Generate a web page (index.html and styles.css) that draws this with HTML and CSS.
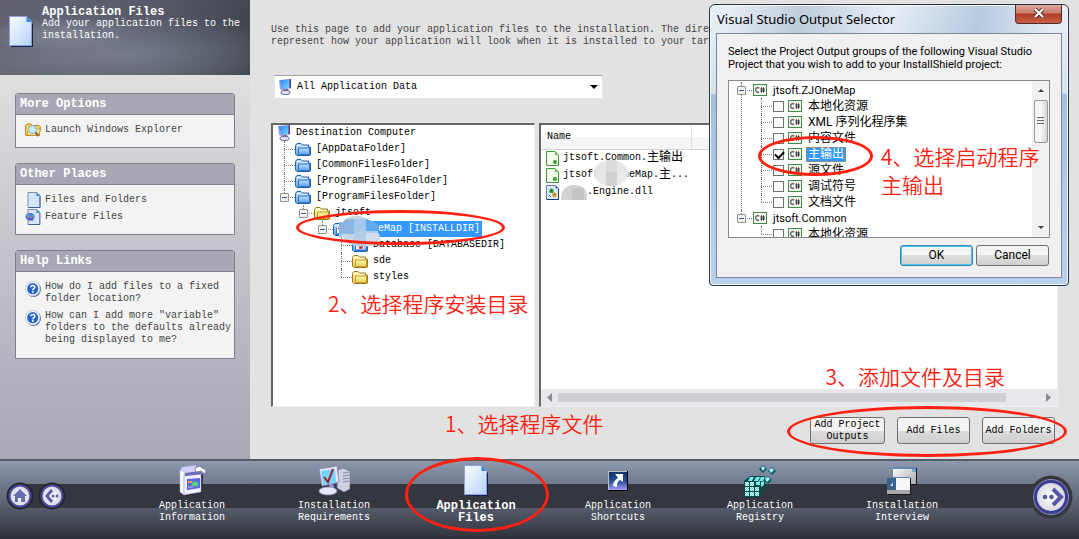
FILE: index.html
```html
<!DOCTYPE html>
<html lang="en">
<head>
    <meta charset="UTF-8">
    <meta name="viewport" content="width=device-width, initial-scale=1.0">
    <title>Application Files</title>
    <link rel="stylesheet" href="styles.css">
</head>
<body>
    <!-- shared icons -->
    <svg class="sprite" width="0" height="0" aria-hidden="true">
        <defs>
            <linearGradient id="g-page" x1="0" y1="0" x2="1" y2="1"><stop offset="0" stop-color="#fdfeff"/><stop offset="1" stop-color="#b4d2f8"/></linearGradient>
            <linearGradient id="g-blue" x1="0" y1="0" x2="0" y2="1"><stop offset="0" stop-color="#c4e0fa"/><stop offset="1" stop-color="#5ea2e6"/></linearGradient>
            <linearGradient id="g-yellow" x1="0" y1="0" x2="0" y2="1"><stop offset="0" stop-color="#fff6b4"/><stop offset="1" stop-color="#f0cf52"/></linearGradient>
            <linearGradient id="g-screen" x1="0" y1="0" x2="1" y2="1"><stop offset="0" stop-color="#2f7ff0"/><stop offset="1" stop-color="#6fdcfa"/></linearGradient>
            <linearGradient id="g-short" x1="0" y1="0" x2="0" y2="1"><stop offset="0" stop-color="#0d3464"/><stop offset=".5" stop-color="#2a4c94"/><stop offset="1" stop-color="#a09cf4"/></linearGradient>
            <linearGradient id="g-win" x1="0" y1="0" x2="1" y2="1"><stop offset="0" stop-color="#ffffff"/><stop offset="1" stop-color="#a9a9a9"/></linearGradient>
            <radialGradient id="g-knob"><stop offset="0" stop-color="#ffffff"/><stop offset="1" stop-color="#d5d5de"/></radialGradient>
            <pattern id="p-cube" width="2" height="2" patternUnits="userSpaceOnUse"><rect width="2" height="2" fill="#5fd6d6"/><path d="M0 0h1v1h-1zM1 1h1v1h-1z" fill="#e8ffff"/></pattern>
        </defs>
        <symbol id="i-page" viewBox="0 0 24 31">
            <path d="M2 2h16l6 6v23H2z" fill="#16204a"/>
            <path d="M.5.5h17l5 5v24h-22z" fill="url(#g-page)" stroke="#8f9fe0"/>
            <path d="M17.500 .5l5 5.500h-5z" fill="#2d8ae0"/>
        </symbol>
        <symbol id="i-folder-blue" viewBox="0 0 16 13">
            <path d="M.5 11V2.500l1.500-2h4l1.500 1.500h6v2h2v8l-1 .5H2z" fill="url(#g-blue)" stroke="#1d63ae"/>
            <path d="M3.500 5h11v6.500h-11z" fill="url(#g-blue)" stroke="#2f78c2"/>
            <path d="M2 2.500h4l1 1h5" fill="none" stroke="#e8f4ff"/>
        </symbol>
        <symbol id="i-folder" viewBox="0 0 16 13">
            <path d="M.5 11V2.500l1.500-2h4l1.500 1.500h6v2h2v8l-1 .5H2z" fill="url(#g-yellow)" stroke="#9c7a12"/>
            <path d="M3.500 5h11v6.500h-11z" fill="url(#g-yellow)" stroke="#bf9a2c"/>
            <path d="M2 2.500h4l1 1h5" fill="none" stroke="#fffce0"/>
        </symbol>
        <symbol id="i-folder-red" viewBox="0 0 16 13">
            <use href="#i-folder-blue"/>
            <path d="M4 4h8v6H4z" fill="#fff"/>
            <path d="M5 5l5 4M10 6v3H7" fill="none" stroke="#d0202a" stroke-width="1.500"/>
        </symbol>
        <symbol id="i-computer" viewBox="0 0 12 16">
            <path d="M0 1l11-1v9l-8 2-2-1z" fill="#9a9ae6"/>
            <path d="M1 1.500l9-1v8L3 10z" fill="url(#g-screen)"/>
            <path d="M10.500 0H12v9l-1.500 1z" fill="#4a3f8c"/>
            <path d="M4 10.500l5-1 1 3.500H4z" fill="#7d6e9e"/>
            <ellipse cx="6.500" cy="13.500" rx="4.500" ry="2.200" fill="#dcdcf4" stroke="#5d4c80" stroke-width=".9"/>
        </symbol>
        <symbol id="i-explorer" viewBox="0 0 16 14">
            <path d="M.6 12V2.500L2 1h4l1 1.500h7l1.400 1.500-1 8.500H2z" fill="#f8d35c" stroke="#b0801c"/>
            <path d="M2 12l2-6h11.500l-2 6.500z" fill="#fce58c" stroke="#c09028" stroke-width=".7"/>
            <circle cx="7.500" cy="6.500" r="4" fill="#c2ecfb" stroke="#7fb0d8"/>
            <path d="M10.500 9.500l3 3.500" stroke="#96603c" stroke-width="2"/>
        </symbol>
        <symbol id="i-doc" viewBox="0 0 15 16">
            <path d="M2.500.5h9l3 3v12h-12z" fill="#d5e5fc" stroke="#7c8cb0"/>
            <path d="M11 .5l3.500 3.500H11z" fill="#3c86c8"/>
            <path d="M14.500 4v11.500h-11" fill="none" stroke="#41608a"/>
        </symbol>
        <symbol id="i-feature" viewBox="0 0 15 16">
            <use href="#i-doc"/>
            <ellipse cx="4.500" cy="7.500" rx="4.500" ry="3.500" fill="#5668cc"/>
            <path d="M0 5h4l1 2 3-2 1 2-3 2-4-1z" fill="#3bb5ee"/>
            <path d="M2 6l3 2 3-1" fill="none" stroke="#d8506c"/>
            <path d="M3 11h5" stroke="#3c3c94"/>
        </symbol>
        <symbol id="i-help" viewBox="0 0 16 16">
            <circle cx="8.500" cy="8.500" r="7.500" fill="#5d6f96"/>
            <circle cx="7.700" cy="7.700" r="7.200" fill="#fff" stroke="#b9c6dd"/>
            <circle cx="7.700" cy="7.700" r="5.600" fill="#2b63cd"/>
            <path d="M5.800 6.300c0-2.600 4.200-2.400 4 0-.1 1.400-2 1.400-2 2.900" fill="none" stroke="#fff" stroke-width="1.500"/>
            <circle cx="7.800" cy="11" r=".9" fill="#fff"/>
        </symbol>
        <symbol id="i-output" viewBox="0 0 13 15">
            <path d="M.5.5h8.500l3.500 3.500v10.500H.5z" fill="#f2faec" stroke="#3c9a34" />
            <path d="M9 .5V4h3.500z" fill="#63b858"/>
            <path d="M1 14.500h11.500V4" fill="none" stroke="#3c9a34"/>
            <circle cx="9" cy="11" r="2" fill="#37a22e"/>
        </symbol>
        <symbol id="i-dll" viewBox="0 0 13 15">
            <path d="M.5.5h9l3 3v11H.5z" fill="#dfecff" stroke="#5d76b4"/>
            <path d="M9.500.5v3h3z" fill="#3668b0"/>
            <path d="M12.500 4v10.500H1" fill="none" stroke="#1f3770"/>
            <path d="M3 6l2-3 3 2-1 3H4z" fill="#2d9c38"/>
            <path d="M6 9l2-2 3 2-1 3-3 .5z" fill="#dca22c"/>
            <path d="M3 10l2 2M5 5.500h1M8 9.500h1" stroke="#26479a"/>
        </symbol>
        <symbol id="i-csharp" viewBox="0 0 14 12">
            <rect x=".5" y=".5" width="13" height="11" fill="#f4f6f2" stroke="#3f8b3f"/>
            <path d="M6.200 4.300C4.500 3 2.600 4 2.600 6s1.900 3 3.600 1.700" fill="none" stroke="#555" stroke-width="1.200"/>
            <path d="M8.500 3.300v5.400M10.500 3.300v5.400M7.300 5h4.700M7.300 7h4.700" stroke="#333" stroke-width=".9"/>
        </symbol>
        <symbol id="i-box" viewBox="0 0 28 31">
            <path d="M4 29l4 2 16-3 1-19-2 1v16z" fill="#1d1e28"/>
            <path d="M3 2l15-2 1 7-13 4-4-1z" fill="#cfcff8" stroke="#9090cc" stroke-width=".6"/>
            <path d="M2 5l4 2v23l-4-3z" fill="#f8f8ff" stroke="#b6b6dc" stroke-width=".5"/>
            <path d="M6 11l17-2v18L6 30z" fill="#f0f0fe" stroke="#a4a4dc" stroke-width=".6"/>
            <path d="M7 8l15-2 2 3-17 2z" fill="#6c6cb8"/>
            <path d="M9 14l13-1v10L9 25z" fill="#6161e6"/>
            <path d="M10 16h4v2h-4z" fill="#f0a040"/>
            <ellipse cx="17" cy="19" rx="3.500" ry="2.500" fill="#50d078"/>
            <path d="M10 22h5" stroke="#a8c8ff"/>
            <path d="M17 3l5-2 2 2 4 2-1 4-4-3-5 1z" fill="#fff" stroke="#70708c" stroke-width=".7"/>
        </symbol>
        <symbol id="i-require" viewBox="0 0 32 31">
            <path d="M20 5l5-2 7 3v18l-6 3-7-4z" fill="#cfd0e2" stroke="#77779c" stroke-width=".8"/>
            <path d="M25 8l6-1M25 11l6-1M25 14l6-1M25 17l6-1" stroke="#8585a8"/>
            <path d="M1 4l18-3 2 16-17 4z" fill="#e6e6fa" stroke="#8080b0" stroke-width=".8"/>
            <path d="M3 6l14-2 1 13-13 3z" fill="#73d4fb"/>
            <path d="M6 12l4 5 5-13" fill="none" stroke="#a31c24" stroke-width="2"/>
            <path d="M11 19l4-1 2 7h-6z" fill="#9292d4"/>
            <ellipse cx="10" cy="26" rx="9" ry="4" fill="#e8e8f6" stroke="#8c8cb0" stroke-width=".8"/>
        </symbol>
        <symbol id="i-shortcut" viewBox="0 0 20 20">
            <path d="M0 0h20v20H0z" fill="#000"/>
            <path d="M0 0h19v19H0z" fill="#c0c0c4"/>
            <path d="M1 1h18v18H1z" fill="url(#g-short)"/>
            <path d="M7 3h8v8l-3-2c-3 2-3 4-3 7l-4-1c0-4 2-6 5-8z" fill="#fff"/>
        </symbol>
        <symbol id="i-registry" viewBox="0 0 32 32">
            <path d="M0 16l6-5h15v13l-5 8H0z" fill="#064a4a"/>
            <path d="M1 17h4v4H1zM6 17h4v4H6zM1 22h4v4H1zM6 22h4v4H6zM11 22h4v4h-4zM1 27h4v4H1zM6 27h4v4H6zM11 27h4v4h-4z" fill="url(#p-cube)"/>
            <path d="M6 12h4l-2 4H4zM12 12h4l-2 4h-4zM17 12h4l-2 4h-4zM12 17l4-1v4h-4zM17 17l3-1v4l-3 2z" fill="#7deaea"/>
            <path d="M19 0l4 4-4 4-4-4z" fill="#0a5c5c"/><path d="M19 1l2 2-2 3-2-3z" fill="#a8ffff"/>
            <path d="M28 2l4 4-4 4-4-4z" fill="#0a5c5c"/><path d="M28 3l2 2-3 3-2-3z" fill="#a8ffff"/>
            <path d="M24 11l4 4-4 4-4-4z" fill="#0a5c5c"/><path d="M24 12l2 2-3 3-2-3z" fill="#a8ffff"/>
        </symbol>
        <symbol id="i-interview" viewBox="0 0 30 28">
            <path d="M7 1h23v17H7z" fill="#15161a"/><path d="M6 0h23v17H6z" fill="url(#g-win)"/><path d="M6 0h23v2H6z" fill="#6486b4"/><path d="M25 2h4v3h-4z" fill="#7c9cc4"/>
            <path d="M1 11h23v17H1z" fill="#15161a"/><path d="M0 10h23v17H0z" fill="#f6f6f8"/><path d="M0 10h23v1H0z" fill="#6486b4"/>
            <path d="M0 11h9v12H0z" fill="#3c6288"/><path d="M3 19l3-4v4z" fill="#b4d8f0"/><path d="M0 23h23v4H0z" fill="#a8a8a8"/>
        </symbol>
    </svg>

    <div class="app">
        <div class="workspace">
            <aside class="sidebar">
                <header class="banner">
                    <svg class="banner-icon"><use href="#i-page"/></svg>
                    <div>
                        <h1>Application Files</h1>
                        <p>Add your application files to the installation.</p>
                    </div>
                </header>
                <div class="panels">
                    <section class="panel">
                        <h2>More Options</h2>
                        <ul class="links">
                            <li><a href="#"><svg><use href="#i-explorer"/></svg>Launch Windows Explorer</a></li>
                        </ul>
                    </section>
                    <section class="panel">
                        <h2>Other Places</h2>
                        <ul class="links">
                            <li><a href="#"><svg><use href="#i-doc"/></svg>Files and Folders</a></li>
                            <li><a href="#"><svg><use href="#i-feature"/></svg>Feature Files</a></li>
                        </ul>
                    </section>
                    <section class="panel">
                        <h2>Help Links</h2>
                        <ul class="links help">
                            <li><a href="#"><svg><use href="#i-help"/></svg><span>How do I add files to a fixed folder location?</span></a></li>
                            <li><a href="#"><svg><use href="#i-help"/></svg><span>How can I add more "variable" folders to the defaults already being displayed to me?</span></a></li>
                        </ul>
                    </section>
                </div>
            </aside>

            <main class="content">
                <p class="intro">Use this page to add your application files to the installation. The directories<br>represent how your application will look when it is installed to your target system.</p>

                <div class="combo">
                    <svg class="icon-pc"><use href="#i-computer"/></svg>
                    <select aria-label="Application data filter">
                        <option>All Application Data</option>
                    </select>
                    <svg class="caret" viewBox="0 0 8 4"><path d="M0 0h8L4 4z"/></svg>
                </div>

                <div class="panes">
                    <div class="pane tree-pane">
                        <div class="node root"><svg class="icon-pc"><use href="#i-computer"/></svg>Destination Computer</div>
                        <ul class="tree">
                            <li><div class="node"><i class="slot"></i><svg><use href="#i-folder-blue"/></svg><span>[AppDataFolder]</span></div></li>
                            <li><div class="node"><i class="slot"></i><svg><use href="#i-folder-blue"/></svg><span>[CommonFilesFolder]</span></div></li>
                            <li><div class="node"><i class="slot"></i><svg><use href="#i-folder-blue"/></svg><span>[ProgramFiles64Folder]</span></div></li>
                            <li>
                                <div class="node"><i class="slot"><button class="toggle" aria-label="Collapse"></button></i><svg><use href="#i-folder-blue"/></svg><span>[ProgramFilesFolder]</span></div>
                                <ul>
                                    <li>
                                        <div class="node"><i class="slot"><button class="toggle" aria-label="Collapse"></button></i><svg><use href="#i-folder"/></svg><span>jtsoft</span></div>
                                        <ul>
                                            <li>
                                                <div class="node selected marked">
                                                    <i class="slot"><button class="toggle" aria-label="Collapse"></button></i><svg><use href="#i-folder-red"/></svg><span>ZJOneMap [INSTALLDIR]</span>
                                                    <svg class="smudge smudge-tree" viewBox="0 0 42 34" aria-hidden="true">
                                                        <clipPath id="c-tree"><path d="M0 9h4C9 2 20 1 28 6c3 2 9 3 11 6v8c4 4 2 12-8 13-10 1-23 0-26-8H0z"/></clipPath>
                                                        <g clip-path="url(#c-tree)"><path d="M0 0h42v34H0z" fill="#a7cdf0"/><path d="M0 6h15v15H0z" fill="#8bb5e2"/><path d="M15 6h12v12H15z" fill="#a4c8ee"/><path d="M27 6h15v12H27z" fill="#5fabee"/><path d="M3 21h12v13H3z" fill="#c5d6e6"/><path d="M15 18h12v16H15z" fill="#b1cee8"/><path d="M27 20h15v14H27z" fill="#d0deec"/><path d="M0 0h30v6H0z" fill="#cfd6dc"/></g>
                                                    </svg>
                                                    <b class="ring ring-tree"></b>
                                                </div>
                                                <ul>
                                                    <li><div class="node"><i class="slot"></i><svg><use href="#i-folder-red"/></svg><span>Database [DATABASEDIR]</span></div></li>
                                                    <li><div class="node"><i class="slot"></i><svg><use href="#i-folder"/></svg><span>sde</span></div></li>
                                                    <li><div class="node"><i class="slot"></i><svg><use href="#i-folder"/></svg><span>styles</span></div></li>
                                                </ul>
                                            </li>
                                        </ul>
                                    </li>
                                </ul>
                            </li>
                        </ul>
                        <p class="note note-2">2、选择程序安装目录</p>
                    </div>

                    <div class="pane list-pane">
                        <table class="files">
                            <thead>
                                <tr><th class="col-name">Name</th><th></th></tr>
                            </thead>
                            <tbody>
                                <tr><td><div class="file"><svg><use href="#i-output"/></svg>jtsoft.Common.<span class="cjk">主输出</span></div></td><td></td></tr>
                                <tr><td><div class="file"><svg><use href="#i-output"/></svg>jtsoft.ZJOneMap.<span class="cjk">主</span>...
                                    <svg class="smudge smudge-list" viewBox="0 0 34 26" aria-hidden="true">
                                        <clipPath id="c-list"><ellipse cx="17" cy="13" rx="17" ry="13"/></clipPath>
                                        <g clip-path="url(#c-list)"><path d="M0 0h34v26H0z" fill="#e6e6e8"/><path d="M12 0h11v12H12z" fill="#dadadc"/><path d="M12 12h11v14H12z" fill="#d0d0d2"/><path d="M23 12h11v14H23z" fill="#e9e9eb"/></g>
                                    </svg></div></td><td></td></tr>
                                <tr><td><div class="file"><svg><use href="#i-dll"/></svg><svg class="blot" viewBox="0 0 26 15" aria-hidden="true">
                                        <clipPath id="c-blot"><path d="M0 15C0 5 5 0 13 0s12 4 13 9v6z"/></clipPath>
                                        <g clip-path="url(#c-blot)"><path d="M0 0h26v15H0z" fill="#d2d2d4"/><path d="M11 3h12v12H11z" fill="#c4c4c7"/></g>
                                    </svg>.Engine.dll</div></td><td></td></tr>
                            </tbody>
                        </table>
                        <p class="note note-3">3、添加文件及目录</p>
                        <div class="hscroll">
                            <svg viewBox="0 0 5 9"><path d="M5 0v9L0 4.500z"/></svg>
                            <div class="track"><div class="thumb"></div></div>
                            <svg viewBox="0 0 5 9"><path d="M0 0v9l5-4.500z"/></svg>
                        </div>
                    </div>
                </div>

                <div class="actions">
                    <button>Add Project Outputs</button>
                    <button>Add Files</button>
                    <button>Add Folders</button>
                    <b class="ring ring-actions"></b>
                </div>
                <p class="note note-1">1、选择程序文件</p>
            </main>
        </div>

        <nav class="steps">
            <div class="steps-left">
                <button class="knob" aria-label="Home">
                    <svg viewBox="0 0 28 28"><circle cx="14" cy="14" r="13.500" fill="#25262e"/><circle cx="14" cy="14" r="10.500" fill="url(#g-knob)" stroke="#4a4a9c" stroke-width="2"/><path d="M14 7l7 7h-2v6h-4v-4h-3v4H9v-6H7z" fill="#6a6aae"/></svg>
                </button>
                <button class="knob" aria-label="Back">
                    <svg viewBox="0 0 28 28"><circle cx="14" cy="14" r="13.500" fill="#25262e"/><circle cx="14" cy="14" r="10.500" fill="url(#g-knob)" stroke="#4a4a9c" stroke-width="2"/><path d="M14 8l-5 6 5 6" fill="none" stroke="#5c5ca6" stroke-width="3"/><circle cx="15" cy="14" r="1.500" fill="#5c5ca6"/><circle cx="19" cy="14" r="1.500" fill="#5c5ca6"/></svg>
                </button>
            </div>
            <a class="step" href="#"><span class="step-icon"><svg width="28" height="31"><use href="#i-box"/></svg></span>Application<br>Information</a>
            <a class="step" href="#"><span class="step-icon"><svg width="32" height="31"><use href="#i-require"/></svg></span>Installation<br>Requirements</a>
            <a class="step current" href="#"><span class="step-icon"><svg width="24" height="31"><use href="#i-page"/></svg></span>Application<br>Files<b class="ring ring-step"></b></a>
            <a class="step" href="#"><span class="step-icon"><svg width="20" height="20"><use href="#i-shortcut"/></svg></span>Application<br>Shortcuts</a>
            <a class="step" href="#"><span class="step-icon"><svg width="32" height="32"><use href="#i-registry"/></svg></span>Application<br>Registry</a>
            <a class="step" href="#"><span class="step-icon"><svg width="30" height="28"><use href="#i-interview"/></svg></span>Installation<br>Interview</a>
            <div class="steps-right">
                <button class="knob next" aria-label="Next">
                    <svg viewBox="0 0 44 44"><circle cx="22" cy="22" r="21.500" fill="#363840"/><circle cx="22" cy="22" r="15.500" fill="url(#g-knob)" stroke="#3c3c98" stroke-width="3"/><circle cx="22" cy="22" r="17.500" fill="none" stroke="#8c8cc4" stroke-width="1"/><path d="M24 14l8 8-8 8" fill="none" stroke="#5656a4" stroke-width="4"/><circle cx="16" cy="22" r="2.300" fill="#5656a4"/><circle cx="22.500" cy="22" r="2.300" fill="#5656a4"/></svg>
                </button>
            </div>
        </nav>

        <div class="dialog" role="dialog" aria-labelledby="dialog-title">
            <div class="titlebar">
                <h2 id="dialog-title">Visual Studio Output Selector</h2>
                <button class="close" aria-label="Close"><svg viewBox="0 0 12 10"><path d="M2 1l8 8M10 1L2 9" stroke="#55342f" stroke-width="4"/><path d="M2 1l8 8M10 1L2 9" stroke="#fff" stroke-width="2"/></svg></button>
            </div>
            <div class="dialog-body">
                <p>Select the Project Output groups of the following Visual Studio<br>Project that you wish to add to your InstallShield project:</p>
                <div class="outputs">
                    <ul class="tree">
                        <li>
                            <div class="node"><i class="slot"><button class="toggle" aria-label="Collapse"></button></i><svg><use href="#i-csharp"/></svg><span>jtsoft.ZJOneMap</span></div>
                            <ul>
                                <li><label class="node"><i class="slot"></i><input type="checkbox"><svg><use href="#i-csharp"/></svg><span>本地化资源</span></label></li>
                                <li><label class="node"><i class="slot"></i><input type="checkbox"><svg><use href="#i-csharp"/></svg><span>XML 序列化程序集</span></label></li>
                                <li><label class="node"><i class="slot"></i><input type="checkbox"><svg><use href="#i-csharp"/></svg><span>内容文件</span></label></li>
                                <li><label class="node selected"><i class="slot"></i><input type="checkbox" checked><svg><use href="#i-csharp"/></svg><span>主输出</span></label></li>
                                <li><label class="node"><i class="slot"></i><input type="checkbox"><svg><use href="#i-csharp"/></svg><span>源文件</span></label></li>
                                <li><label class="node"><i class="slot"></i><input type="checkbox"><svg><use href="#i-csharp"/></svg><span>调试符号</span></label></li>
                                <li><label class="node"><i class="slot"></i><input type="checkbox"><svg><use href="#i-csharp"/></svg><span>文档文件</span></label></li>
                            </ul>
                        </li>
                        <li>
                            <div class="node"><i class="slot"><button class="toggle" aria-label="Collapse"></button></i><svg><use href="#i-csharp"/></svg><span>jtsoft.Common</span></div>
                            <ul>
                                <li><label class="node"><i class="slot"></i><input type="checkbox"><svg><use href="#i-csharp"/></svg><span>本地化资源</span></label></li>
                            </ul>
                        </li>
                    </ul>
                    <div class="vscroll">
                        <svg viewBox="0 0 6 3"><path d="M3 0l3 3H0z"/></svg>
                        <div class="vthumb"></div>
                        <svg viewBox="0 0 6 3"><path d="M0 0h6L3 3z"/></svg>
                    </div>
                    <b class="ring ring-output"></b>
                    <p class="note note-4">4、选择启动程序<br>主输出</p>
                </div>
                <div class="dialog-buttons">
                    <button class="default">OK</button>
                    <button>Cancel</button>
                </div>
            </div>
        </div>
    </div>
</body>
</html>
```

FILE: styles.css
```css
* {
    box-sizing: border-box;
}
body {
    margin: 0;
    font: 10px/12px "Liberation Mono", "Noto Sans CJK SC", monospace;
    color: #000;
    background-color: #e2e2e2;
}
h1, h2, p, ul {
    margin: 0;
    padding: 0;
    font-weight: normal;
}
ul {
    list-style: none;
}
a {
    color: inherit;
    text-decoration: none;
}
button, select, input {
    font: inherit;
    color: inherit;
    margin: 0;
    padding: 0;
}
.sprite {
    position: absolute;
}
.app {
    position: relative;
    display: flex;
    flex-direction: column;
    min-height: 100vh;
    overflow: hidden;
}
.workspace {
    flex: 1;
    display: flex;
}

/* sidebar */
.sidebar {
    flex: 0 0 250px;
    display: flex;
    flex-direction: column;
}
.banner {
    display: flex;
    gap: 9px;
    height: 75px;
    padding: 6px 8px 0 9px;
    color: #fff;
    background:
        radial-gradient(ellipse at 60px 34px, rgba(150, 155, 170, 0.5), transparent 80px),
        radial-gradient(ellipse 180px 40px at 120px 54px, rgba(140, 145, 162, 0.6), transparent),
        linear-gradient(100deg, #62616f 0%, #5f6270 20%, #565a67 60%, #3f444e 100%);
}
.banner-icon {
    flex: none;
    width: 24px;
    height: 31px;
    margin-top: 10px;
}
.banner h1 {
    font-size: 12px;
    font-weight: bold;
}
.panels {
    flex: 1;
    display: flex;
    flex-direction: column;
    gap: 15px;
    padding: 18px 15px;
    background: linear-gradient(#dfdfe0, #b4b3bf 75%, #a9a7b4);
}
.panel {
    border: 1px solid #7f7e8e;
    border-radius: 3px 3px 0 0;
    background-color: #f3f3f3;
}
.panel h2 {
    padding: 4px;
    font-size: 12px;
    font-weight: bold;
    color: #fff;
    background-color: #a9a7b6;
    border-bottom: 1px solid #7f7e8e;
}
.links {
    padding: 6px 2px 9px 9px;
    color: #444;
}
.links a {
    display: flex;
    align-items: center;
    gap: 4px;
    min-height: 17px;
}
.links svg {
    flex: none;
    width: 16px;
    height: 16px;
}
.links.help {
    padding: 9px 2px 12px 9px;
}
.links.help a {
    align-items: flex-start;
}
.links.help li + li {
    margin-top: 5px;
}

/* main area */
.content {
    position: relative;
    flex: 1;
    display: flex;
    flex-direction: column;
    min-width: 0;
    padding: 24px 21px 15px;
}
.intro {
    color: #444;
    white-space: nowrap;
}
.combo {
    display: flex;
    align-items: center;
    gap: 6px;
    width: 329px;
    height: 24px;
    margin: 27px 0 24px 3px;
    padding: 0 4px;
    background-color: #fff;
    border: 1px solid #dfe5ee;
    border-top-color: #a5a5ab;
}
.combo select {
    flex: 1;
    appearance: none;
    border: none;
    background: none;
    outline: none;
}
.caret {
    width: 8px;
    height: 4px;
}
.icon-pc {
    width: 12px;
    height: 16px;
}
.panes {
    flex: 1;
    display: flex;
    gap: 4px;
}
.pane {
    position: relative;
    background-color: #fff;
    border: 2px solid #666;
    border-color: #666 #f0f0f0 #f0f0f0 #666;
    border-width: 2px 1px 1px 2px;
}
.tree-pane {
    flex: 0 0 264px;
    padding-left: 3px;
}
.list-pane {
    flex: 1;
    display: flex;
    flex-direction: column;
}

/* tree views */
.node {
    position: relative;
    display: flex;
    align-items: center;
    height: 16px;
    white-space: nowrap;
}
.node.root {
    gap: 6px;
    padding-left: 2px;
}
.node.marked {
    z-index: 1;
}
.tree ul {
    padding-left: 19px;
}
.tree li {
    position: relative;
}
.tree li::before {
    content: "";
    position: absolute;
    left: 8px;
    top: 0;
    bottom: 0;
    border-left: 1px dotted #777;
}
.tree li:last-child::before {
    bottom: auto;
    height: 8px;
}
.slot {
    position: relative;
    flex: none;
    width: 19px;
    padding-left: 4px;
    background: linear-gradient(90deg, #888 50%, transparent 50%) 8px 50% / 2px 1px repeat-x content-box;
}
.slot:empty {
    height: 1px;
    margin-left: 8px;
    width: 11px;
    padding: 0;
}
.toggle {
    display: block;
    width: 9px;
    height: 9px;
    border: 1px solid #919191;
    border-radius: 1px;
    background: linear-gradient(#3a5aa0, #3a5aa0) center / 5px 1px no-repeat #f2f2f2;
}
.tree .node > svg:not(.smudge) {
    flex: none;
    width: 16px;
    height: 13px;
}
.tree .node span {
    margin-left: 3px;
    padding: 0 2px;
    line-height: 16px;
}
.node.selected span {
    color: #fff;
    background-color: #3399ff;
}

/* file list */
.files {
    width: 100%;
    border-collapse: collapse;
    table-layout: fixed;
}
.files th {
    height: 24px;
    padding: 0 6px;
    font-weight: normal;
    text-align: left;
    background: linear-gradient(#fff 50%, #f4f5f7 50%);
    border-right: 1px solid #dcdfe4;
    border-bottom: 1px solid #d5d5d5;
}
.files .col-name {
    width: 150px;
}
.files td {
    height: 17px;
    padding: 0 0 0 5px;
}
.file {
    position: relative;
    display: flex;
    align-items: center;
    height: 17px;
    white-space: nowrap;
}
.file > svg:first-child {
    width: 13px;
    height: 15px;
    margin-right: 4px;
}
.cjk {
    font-size: 12px;
}
.blot {
    width: 26px;
    height: 15px;
    margin-left: -2px;
}
.smudge {
    position: absolute;
}
.smudge-tree {
    left: 25px;
    top: -8px;
    width: 42px;
    height: 34px;
}
.smudge-list {
    left: 48px;
    top: -7px;
    width: 34px;
    height: 26px;
}
.hscroll {
    display: flex;
    align-items: center;
    gap: 6px;
    height: 17px;
    margin-top: auto;
    padding: 0 6px;
    background-color: #e8e8ec;
}
.hscroll svg {
    width: 5px;
    height: 9px;
    fill: #868999;
}
.track {
    flex: 1;
}
.thumb {
    width: 93%;
    height: 9px;
    background-color: #cfcfd4;
}
.actions {
    position: relative;
    display: flex;
    gap: 12px;
    align-self: flex-end;
    margin: 10px 3px 0 0;
}
.actions button {
    width: 73px;
    height: 27px;
    line-height: 12px;
    border: 1px solid #707070;
    border-radius: 3px;
    background: linear-gradient(#f3f3f3 50%, #dcdcdc 50%, #cfcfcf);
}
.actions button:first-child {
    width: 75px;
}

/* red marks */
.note {
    position: absolute;
    font: 21px/28px "Noto Sans CJK SC", sans-serif;
    font-weight: 350;
    color: #ff2010;
    white-space: nowrap;
}
.note-1 {
    left: 195px;
    bottom: 22px;
}
.note-2 {
    left: 55px;
    top: 164px;
}
.note-3 {
    right: 52px;
    bottom: 16px;
}
.note-4 {
    left: 152px;
    top: 61px;
}
.ring {
    position: absolute;
    border: 3px solid #ff2010;
    border-radius: 50%;
    pointer-events: none;
}
.ring-tree {
    left: -18px;
    top: -11px;
    width: 209px;
    height: 35px;
}
.ring-actions {
    left: -23px;
    right: -12px;
    top: -11px;
    height: 51px;
}
.ring-step {
    left: 0;
    right: -2px;
    top: -4px;
    bottom: 7px;
}
.ring-output {
    left: 29px;
    top: 55px;
    width: 115px;
    height: 40px;
}

/* step bar */
.steps {
    display: flex;
    height: 80px;
    color: #fff;
    border-top: 2px solid #565b69;
    background:
        linear-gradient(#353740, #353740) 22px 23px / calc(100% - 52px) 24px no-repeat,
        linear-gradient(#8e98ae, #707a8d 23px, #565c6c 47px, #2f3138);
}
.steps-left {
    flex: 0 0 121px;
    display: flex;
    gap: 4px;
    padding: 21px 0 0 6px;
}
.steps-right {
    flex: 0 0 106px;
    display: flex;
    justify-content: flex-end;
    padding: 14px 6px 0 0;
}
.knob {
    width: 28px;
    height: 28px;
    border: none;
    background: none;
}
.knob svg {
    display: block;
}
.knob.next {
    width: 44px;
    height: 44px;
}
.step {
    position: relative;
    flex: 1;
    text-align: center;
}
.step.current {
    font-size: 12px;
    font-weight: bold;
}
.step-icon {
    display: flex;
    align-items: center;
    justify-content: center;
    height: 39px;
}

/* output selector dialog */
.dialog {
    position: absolute;
    top: 4px;
    right: 10px;
    width: 360px;
    padding: 0 6px 7px;
    font: 11px/13px Roboto, "Noto Sans CJK SC", sans-serif;
    border: 1px solid #2a3440;
    border-radius: 6px 6px 4px 4px;
    background:
        linear-gradient(100deg, transparent 5%, rgba(150, 172, 196, 0.5) 25%, transparent 50%, rgba(150, 180, 212, 0.6) 75%, transparent 95%) 0 0 / 100% 30px no-repeat,
        linear-gradient(#e9eff6, #d6e1ee 88px, #a3c1e2 90px, #b9d1ec);
    box-shadow: inset 0 0 0 1px #f4f9ff;
}
.titlebar {
    display: flex;
    justify-content: space-between;
    height: 28px;
    padding: 0 0 0 1px;
}
.titlebar h2 {
    font: 13px/28px "Noto Sans", sans-serif;
}
.close {
    width: 47px;
    height: 19px;
    border: 1px solid #5a2a26;
    border-top: none;
    border-radius: 0 0 4px 4px;
    background: linear-gradient(#dfa79c, #c9796b 45%, #b03c28 50%, #c8604a);
}
.close svg {
    width: 12px;
    height: 10px;
}
.dialog-body {
    padding: 11px;
    background-color: #f0f0f0;
    border: 1px solid #7b8794;
}
.outputs {
    position: relative;
    display: flex;
    height: 158px;
    margin: 9px 0 7px;
    background-color: #fff;
    border: 1px solid #828790;
}
.outputs .tree {
    flex: 1;
    padding: 1px 0 0 4px;
    overflow: hidden;
}
.outputs .tree ul {
    padding-left: 20px;
}
.outputs .slot {
    width: 20px;
}
.outputs .slot:empty {
    width: 11px;
}
.outputs .tree .node > svg {
    width: 14px;
    height: 12px;
}
.outputs .tree .node span {
    margin-left: 4px;
    line-height: 15px;
}
.outputs .tree label span {
    margin-left: 3px;
    font-size: 12px;
}
.outputs .selected span {
    outline: 1px dotted #d08030;
    outline-offset: -1px;
}
.outputs input {
    appearance: none;
    flex: none;
    width: 11px;
    height: 11px;
    margin: 0 4px 0 1px;
    border: 1px solid #707070;
    background-color: #fff;
}
.outputs input:checked::before {
    content: "";
    display: block;
    width: 7px;
    height: 4px;
    margin: 1px 0 0 1px;
    border: solid #000;
    border-width: 0 0 2px 2px;
    transform: rotate(-45deg);
}
.vscroll {
    display: flex;
    flex-direction: column;
    align-items: center;
    width: 17px;
    padding: 8px 1px;
    background-color: #f0f0f0;
}
.vscroll svg {
    width: 6px;
    height: 3px;
    fill: #404040;
}
.vscroll svg:last-child {
    margin-top: auto;
}
.vthumb {
    width: 14px;
    height: 43px;
    margin-top: 8px;
    border: 1px solid #979797;
    border-radius: 2px;
    background:
        repeating-linear-gradient(#666 0 1px, transparent 1px 3px) center / 7px 9px no-repeat,
        linear-gradient(90deg, #f5f5f5 50%, #d4d4d8);
}
.dialog-buttons {
    display: flex;
    justify-content: flex-end;
    gap: 3px;
    padding-right: 1px;
}
.dialog-buttons button {
    width: 73px;
    height: 21px;
    font-size: 12px;
    border: 1px solid #707070;
    border-radius: 3px;
    background: linear-gradient(#f3f3f3 50%, #dedede 50%, #d0d0d0);
}
.dialog-buttons .default {
    border-color: #3c7fb1;
    box-shadow: inset 0 0 0 1px #48c8f0;
}
```
